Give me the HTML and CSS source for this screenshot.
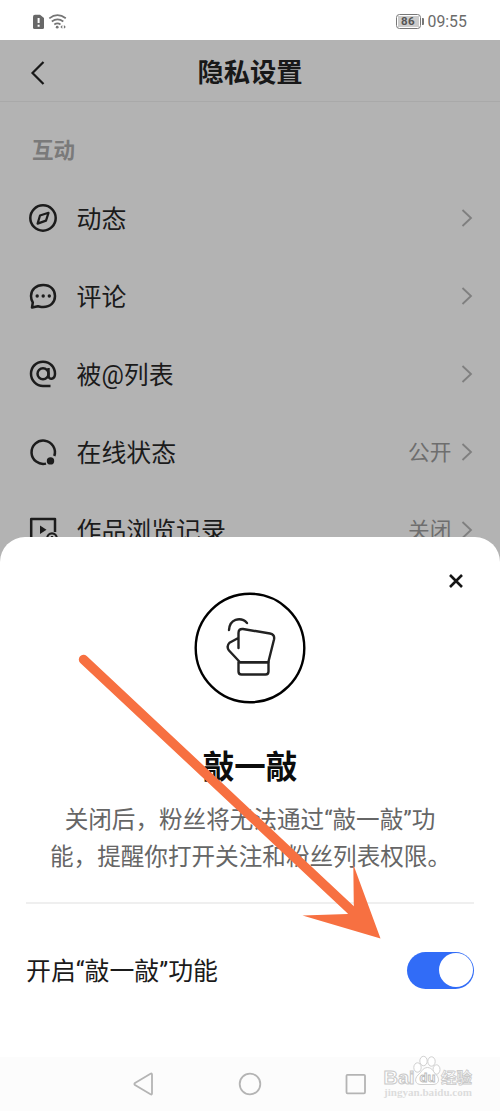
FILE: index.html
```
<!DOCTYPE html>
<html lang="zh-CN">
<head>
<meta charset="utf-8">
<title>隐私设置</title>
<link rel="stylesheet" href="styles.css">
</head>
<body>
<div class="phone">
  <header class="status">
    <svg class="status-icons" width="36" height="18" viewBox="0 0 36 18">
      <path d="M3 1.800H8L12 5V14.500Q12 16 10.500 16H2.500Q1 16 1 14.500V3.800Q1 1.800 3 1.800Z" fill="#686868"/>
      <path d="M6.600 5V10M6.600 11.800V13.800" stroke="#fff" stroke-width="2"/>
      <g fill="none" stroke="#757575" stroke-width="1.700">
        <path d="M17.300 5.300Q25.500 -1 33.800 5.300M19.800 8.500Q25.500 4.300 31.300 8.500M22.300 11.500Q25.500 9.300 28.500 11.500"/>
      </g>
      <circle cx="25.200" cy="14.200" r="1.400" fill="#757575"/>
      <path d="M30.300 12 28.400 13.900 30.300 15.800ZM31.900 12 33.800 13.900 31.900 15.800Z" fill="#757575"/>
    </svg>
    <div class="status-right">
      <span class="battery"><span class="level">86</span></span>
      <span class="clock">09:55</span>
    </div>
  </header>

  <main class="settings">
    <div class="titlebar">
      <svg class="back" width="16" height="26" viewBox="0 0 16 26"><path d="M13.500 2 2.500 13 13.500 24" fill="none" stroke="#181818" stroke-width="2.200"/></svg>
      <h1 class="page-title">隐私设置</h1>
    </div>
    <h2 class="section">互动</h2>
    <ul class="rows">
      <li class="row">
        <svg class="icon" viewBox="0 0 30 30"><circle cx="15" cy="15" r="12.700"/><path class="thin" d="M20.500 9.800 18 17.600 9.600 20.600 12 12.500Z"/></svg>
        <span class="label">动态</span>
        <svg class="chevron" viewBox="0 0 12 20"><path d="M1.500 2 10 10 1.500 18"/></svg>
      </li>
      <li class="row">
        <svg class="icon" viewBox="0 0 30 30"><path d="M15.200 4C22.500 4 27 8.700 27 15S22.500 26 15.200 26C13 26 11.500 25.500 10 25.200L4 26.500L4.800 21.500C3.700 19.700 3 17.500 3 15C3 8.700 8 4 15.200 4Z"/><g class="dots"><circle cx="9.200" cy="15" r="1.700"/><circle cx="15.200" cy="15" r="1.700"/><circle cx="21.300" cy="15" r="1.700"/></g></svg>
        <span class="label">评论</span>
        <svg class="chevron" viewBox="0 0 12 20"><path d="M1.500 2 10 10 1.500 18"/></svg>
      </li>
      <li class="row">
        <svg class="icon" viewBox="0 0 30 30"><circle cx="15" cy="14.800" r="5.500"/><path d="M20.500 9V16.500C20.500 21.500 27 20.500 27 14.800C27 8 22 2.800 15 2.800S3 8 3 14.800S8.500 27 15 27H22.500"/></svg>
        <span class="label">被@列表</span>
        <svg class="chevron" viewBox="0 0 12 20"><path d="M1.500 2 10 10 1.500 18"/></svg>
      </li>
      <li class="row">
        <svg class="icon" viewBox="0 0 30 30"><path d="M26.300 19A11.700 11.700 0 1 0 18 26.600"/><g class="dots"><circle cx="22.500" cy="23.900" r="3.700"/></g></svg>
        <span class="label">在线状态</span>
        <span class="value">公开</span>
        <svg class="chevron" viewBox="0 0 12 20"><path d="M1.500 2 10 10 1.500 18"/></svg>
      </li>
      <li class="row">
        <svg class="icon" viewBox="0 0 30 30"><path d="M16 27H3.200V4H27V17"/><g class="dots"><path d="M12 10.500 18.500 14.700 12 19Z"/></g><circle class="thin" cx="24" cy="23.200" r="4.800"/><path class="thin" d="M24 21V24H26"/></svg>
        <span class="label">作品浏览记录</span>
        <span class="value">关闭</span>
        <svg class="chevron" viewBox="0 0 12 20"><path d="M1.500 2 10 10 1.500 18"/></svg>
      </li>
    </ul>
  </main>

  <section class="sheet">
    <svg class="close" width="16" height="16" viewBox="0 0 16 16"><path d="M2 2 14 14M14 2 2 14" stroke="#151515" stroke-width="2.600"/></svg>
    <svg class="knock" width="112" height="112" viewBox="0 0 112 112" fill="none" stroke="#222" stroke-width="2.400" stroke-linecap="round" stroke-linejoin="round">
      <circle cx="56" cy="56" r="54.300" stroke="#000"/>
      <path d="M35 38Q35.500 30 41.500 27.800Q48.500 25.800 53 31"/>
      <path d="M44.500 56V41Q44.500 36.500 49 37L76 41.500Q81 42.500 80 47.500L74.300 70.200H46L35 58.500Q32 54.500 35.500 50.800L44.300 46"/>
      <path d="M44.500 70.200H74.500V79.500Q74.500 82.500 71.500 82.500H47.500Q44.500 82.500 44.500 79.500Z"/>
    </svg>
    <h2 class="sheet-title">敲一敲</h2>
    <p class="desc"><span>关闭后，粉丝将无法通过“敲一敲”功</span><span>能，提醒你打开关注和粉丝列表权限。</span></p>
    <div class="switch-row">
      <span class="switch-label">开启“敲一敲”功能</span>
      <span class="switch"><span class="knob"></span></span>
    </div>
  </section>

  <nav class="navbar">
    <svg width="24" height="26" viewBox="0 0 24 26"><path d="M20 3.500V22.500Q20 24 18.500 23.200L3 14Q1.800 13 3 12L18.500 2.800Q20 2 20 3.500Z"/></svg>
    <svg width="24" height="26" viewBox="0 0 24 26"><circle cx="12" cy="13" r="10.300"/></svg>
    <svg width="24" height="26" viewBox="0 0 24 26"><rect x="2.500" y="3.800" width="18.500" height="18.500" rx="1"/></svg>
  </nav>

  <svg class="watermark" width="100" height="50" viewBox="0 0 100 50">
    <g class="paw">
      <ellipse cx="36.500" cy="17.500" rx="3.700" ry="4.700"/>
      <ellipse cx="42.500" cy="11" rx="3.700" ry="4.700"/>
      <ellipse cx="50.500" cy="11.500" rx="3.700" ry="4.700"/>
      <ellipse cx="55.500" cy="19.500" rx="3.500" ry="4.700"/>
      <path d="M46.500 17.500C41 18 41 22 37 25C33 29 34 34.500 40 34.500H52C58 34.500 59 29 55.500 25C52 22 52 18 46.500 17.500Z"/>
    </g>
    <text class="brand" x="2.500" y="34" textLength="31" lengthAdjust="spacingAndGlyphs">Bai</text>
    <text class="du" x="38.500" y="31.500">du</text>
    <text class="brand cn" x="60" y="32.500" textLength="31" lengthAdjust="spacingAndGlyphs">经验</text>
    <text class="url" x="3" y="45.500" textLength="88" lengthAdjust="spacingAndGlyphs">jingyan.baidu.com</text>
  </svg>

  <svg class="arrow" width="310" height="295" viewBox="0 0 310 295">
    <path d="M8.500 9.500 277 261" stroke="#f77041" stroke-width="9.400" stroke-linecap="round"/>
    <path d="M305.500 288.500 278.300 214.500 278.800 257 272.500 264 227.500 265.500Z" fill="#f77041"/>
  </svg>
</div>
</body>
</html>
```
FILE: styles.css
```
* { box-sizing: border-box; }
body { margin: 0; background: #fff; font-family: Roboto, "Noto Sans CJK SC", sans-serif; }
h1, h2, p, ul { margin: 0; padding: 0; }
svg { display: block; flex: none; }
.phone { position: relative; z-index: 0; width: 500px; height: 1111px; overflow: hidden; display: flex; flex-direction: column; background: #fff; }

.status { height: 40px; flex: none; display: flex; justify-content: space-between; align-items: center; padding: 3px 33px 0 32px; }
.status-right { display: flex; align-items: center; gap: 7px; }
.battery { position: relative; width: 25px; height: 15px; border: 1.500px solid #777; border-radius: 3.500px; padding: 1px; display: flex; }
.battery::after { content: ""; position: absolute; right: -4.500px; top: 3px; width: 2px; height: 7px; background: #777; border-radius: 0 1px 1px 0; }
.level { flex: 1; background: #ccc; color: #555; font-size: 11.500px; line-height: 11px; font-weight: 700; text-align: center; letter-spacing: .3px; }
.clock { width: 39.500px; font-size: 15.800px; line-height: 20px; color: #6b6b6b; white-space: nowrap; }

.settings { height: 497px; flex: none; background: #b3b3b3; overflow: visible; }
.titlebar { height: 62px; display: grid; grid-template-columns: 70px 1fr 70px; align-items: center; border-bottom: 1px solid #a9a9a9; padding-top: 4px; }
.back { margin-left: 30px; }
.page-title { font-size: 26.300px; line-height: 36px; font-weight: 700; color: #181818; text-align: center; margin-top: 1px; }
.section { padding: 32px 0 0 32px; height: 77px; font-size: 21.500px; line-height: 34px; font-weight: 700; color: #7a7a7a; }
.rows { list-style: none; }
.row { height: 78px; display: flex; align-items: center; padding: 0 27px 0 28px; }
.icon { width: 30px; height: 30px; margin-right: 18.500px; fill: none; stroke: #1c1c1c; stroke-width: 2.500; stroke-linejoin: round; }
.icon .thin { stroke-width: 2.200; }
.icon .dots { fill: #1c1c1c; stroke: none; }
.label { flex: 1; font-size: 24.900px; line-height: 36px; color: #1b1b1b; padding-top: 3px; }
.value { font-size: 21.700px; line-height: 32px; color: #6e6e6e; margin-right: 9.500px; padding-top: 2px; }
.chevron { width: 12px; height: 20px; fill: none; stroke: #7f7f7f; stroke-width: 1.800; }

.sheet { position: relative; flex: none; height: 520px; background: #fff; border-radius: 25px 25px 0 0; display: flex; flex-direction: column; align-items: center; padding: 36px 26px 0; }
.sheet::before { content: ""; position: absolute; z-index: -1; left: 0; right: 0; top: 0; height: 30px; background: #b3b3b3; }
.close { align-self: flex-end; margin-right: 10.500px; }
.knock { margin-top: 3px; }
.sheet-title { margin-top: 42px; font-size: 31.500px; line-height: 44px; font-weight: 700; color: #0c0c0c; }
.desc { width: 448px; height: 102px; margin-top: 12px; border-bottom: 2px solid #efefef; font-size: 23.600px; line-height: 37px; color: #666; text-align: center; white-space: nowrap; }
.desc span { display: block; }
.desc span + span { padding-left: 1px; }
.switch-row { width: 448px; height: 132px; display: flex; align-items: center; justify-content: space-between; }
.switch-label { font-size: 24.900px; line-height: 36px; color: #1b1b1b; padding-top: 3px; }
.switch { width: 67px; height: 37px; border-radius: 19px; background: #316cf7; display: flex; justify-content: flex-end; align-items: center; padding-right: 1.500px; }
.knob { width: 34px; height: 34px; border-radius: 50%; background: #fff; }

.navbar { flex: 1; background: #fcfcfc; display: flex; justify-content: space-between; align-items: center; padding: 0 132px; }
.navbar svg { fill: none; stroke: #b4b4b4; stroke-width: 1.800; }

.watermark { position: absolute; left: 381px; top: 1050px; }
.paw { fill: #fff; stroke: #d0d0d0; stroke-width: 1; }
.brand { font: 700 19px "Liberation Sans", sans-serif; fill: #fff; stroke: #c9c9c9; stroke-width: 1; }
.cn { font: 700 15px "Noto Sans CJK SC", sans-serif; stroke-width: .8; }
.du { font: 700 13px "Liberation Sans", sans-serif; fill: #fff; stroke: #bbb; stroke-width: .9; }
.url { font: 700 9.500px "Liberation Serif", serif; fill: #dcdcdc; }
.arrow { position: absolute; left: 75px; top: 650px; }
```
